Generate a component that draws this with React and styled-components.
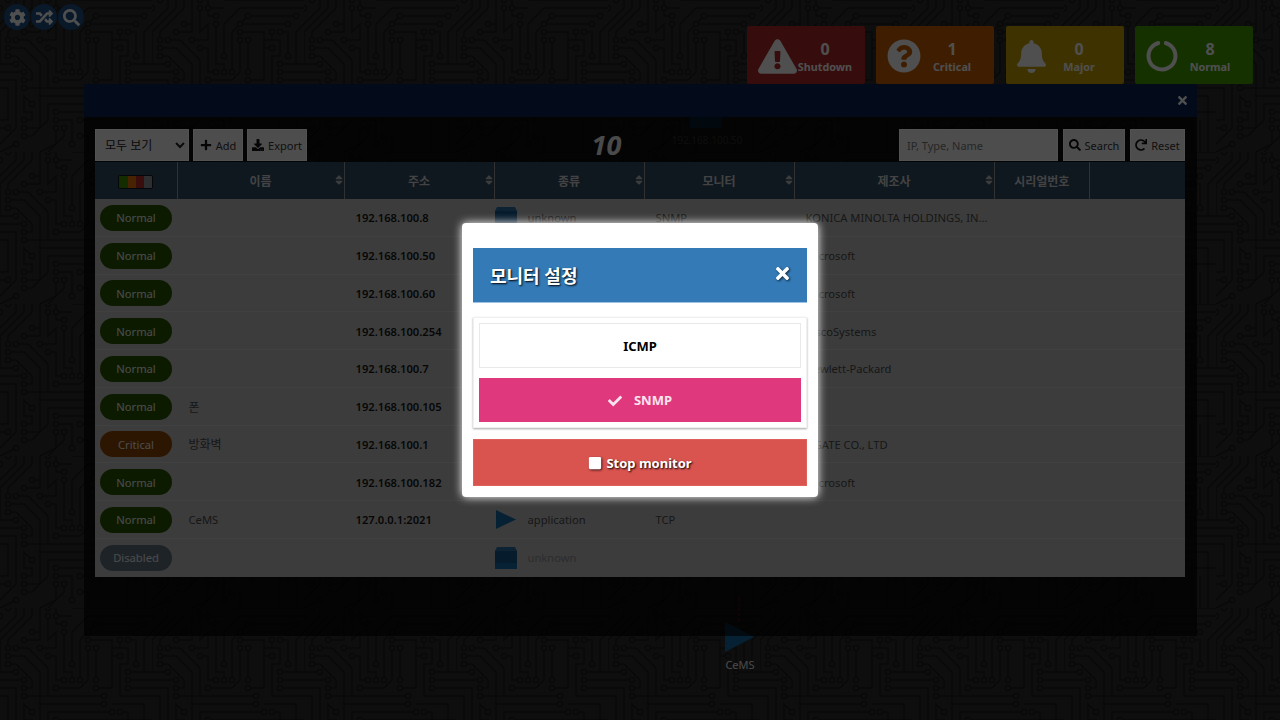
import React from 'react';
import styled, { createGlobalStyle } from 'styled-components';
import {
  FaCog, FaRandom, FaSearch, FaExclamationTriangle, FaQuestionCircle, FaBell, FaCircleNotch,
  FaPlus, FaDownload, FaRedo, FaTimes, FaSort, FaCheck, FaStop,
} from 'react-icons/fa';

const FONT = '"Noto Sans", "Noto Sans CJK KR", sans-serif';

const Global = createGlobalStyle`
  html, body { margin: 0; padding: 0; height: 100%; overflow: hidden; background: #2c2c2c; }
  * { box-sizing: border-box; }
  body { font-family: ${FONT}; }
`;

const Page = styled.div`
  position: relative;
  width: 1280px;
  height: 720px;
  overflow: hidden;
  background: #2c2c2c;
`;

const Backdrop = styled.svg`
  position: absolute;
  inset: 0;
  width: 1280px;
  height: 720px;
`;

const Content = styled.div`
  position: relative;
  display: flex;
  flex-direction: column;
  height: 720px;
`;

const TopBar = styled.header`
  display: flex;
  justify-content: space-between;
  align-items: flex-start;
  height: 84px;
  padding: 4px 27px 0 4px;
`;

const RoundTools = styled.div`
  display: flex;
  gap: 1px;
`;

const RoundTool = styled.button`
  width: 26px;
  height: 26px;
  padding: 0;
  border: 0;
  border-radius: 50%;
  background: #1c4f80;
  color: #f4f4f4;
  display: flex;
  align-items: center;
  justify-content: center;
  font-size: 17px;
`;

const StatusCards = styled.div`
  display: flex;
  gap: 11.5px;
  margin-top: 22px;
`;

const StatusCard = styled.div`
  display: flex;
  align-items: center;
  width: 118px;
  height: 58px;
  padding: 0 11px;
  border-radius: 2px;
  background: ${p => p.$bg};
  color: #f4f4f4;
`;

const CardIcon = styled.div`
  flex: none;
  width: ${p => p.$w}px;
  display: flex;
  justify-content: center;
  font-size: ${p => p.$size}px;
  margin-top: 2px;
`;

const CardText = styled.div`
  flex: 1;
  text-align: center;
  font-weight: 700;
  white-space: nowrap;
  margin-top: 3px;
`;

const CardValue = styled.div`
  font-size: 16px;
  line-height: 20px;
`;

const CardLabel = styled.div`
  font-size: 10.8px;
  line-height: 16px;
`;

const Panel = styled.section`
  margin-left: 84px;
  width: 1113px;
  height: 552px;
  background: rgba(0, 0, 0, 0.66);
  position: relative;
`;

const PanelHead = styled.div`
  height: 33px;
  background: #0b2552;
  display: flex;
  align-items: center;
  justify-content: flex-end;
  padding-right: 8px;
  color: #f4f4f4;
  font-size: 13px;
`;

const PanelBody = styled.div`
  padding: 12px 12px 0 11px;
`;

const Toolbar = styled.div`
  display: flex;
  justify-content: space-between;
  align-items: flex-start;
  height: 33px;
`;

const ToolGroup = styled.div`
  display: flex;
  gap: 4px;
`;

const FilterSelect = styled.select`
  width: 94px;
  height: 32px;
  padding: 0 0 0 5px;
  border: 1px solid #fff;
  border-radius: 0;
  background: #f0f0f0;
  color: #222;
  font: 12px ${FONT};
`;

const ToolButton = styled.button`
  height: 32px;
  padding: 0;
  border: 1px solid #fff;
  background: #f0f0f0;
  color: #333;
  display: flex;
  align-items: center;
  gap: 4px;
  font: 11px ${FONT};
  width: ${p => p.$w}px;
  justify-content: center;
  margin-left: ${p => p.$gap || 0}px;
  svg { flex: none; color: #111; font-size: 12px; }
`;

const CountLabel = styled.div`
  color: #e6e6e6;
  font: italic 700 27px/32px ${FONT};
  margin-left: 7px;
`;

const SearchInput = styled.input`
  width: 159px;
  height: 32px;
  padding: 0 7px;
  border: 1px solid #fff;
  background: #f0f0f0;
  font: 11px ${FONT};
  margin-right: 1px;
  &::placeholder { color: #777; opacity: 1; }
`;

const Table = styled.table`
  width: 1090px;
  table-layout: fixed;
  border-collapse: separate;
  border-spacing: 0;
`;

const Th = styled.th`
  position: relative;
  height: 37px;
  padding: 0;
  background: #2f4a60;
  border-right: 1px solid #9a9a9a;
  color: #d0d0d0;
  font-size: 12px;
  font-weight: 600;
  text-align: center;
  &:last-child { border-right: 0; }
`;

const SortMark = styled.span`
  position: absolute;
  right: -1px;
  top: 12px;
  font-size: 12px;
  line-height: 12px;
  color: #bbb;
`;

const StatusBar = styled.div`
  display: inline-flex;
  vertical-align: middle;
  width: 35px;
  height: 14px;
  border: 1px solid #101820;
  border-radius: 2px;
  overflow: hidden;
`;

const StatusBit = styled.span`
  flex: 1;
  background: ${p => p.$c};
`;

const Td = styled.td`
  height: 37.75px;
  padding: 1px 0 0 ${p => p.$pad ?? 11}px;
  background: rgba(255, 255, 255, 0.72);
  border-bottom: 1px solid rgba(255, 255, 255, 0.2);
  color: ${p => p.$dim ? '#8a8a8a' : '#484848'};
  font-size: ${p => p.$cjk ? 12 : 11.2}px;
  white-space: nowrap;
  overflow: hidden;
  tr:last-child & { border-bottom-color: transparent; }
`;

const AddressCell = styled(Td)`
  color: #141414;
  font-weight: 600;
`;

const Pill = styled.span`
  display: flex;
  align-items: center;
  justify-content: center;
  width: 72px;
  height: 26px;
  border-radius: 13px;
  background: ${p => p.$bg};
  color: #e8e8e8;
  font-size: 11.2px;
`;

const TypeCell = styled.div`
  display: flex;
  align-items: center;
  gap: 11px;
`;

const NodeLayer = styled.svg`
  position: absolute;
  inset: 0;
  width: 1280px;
  height: 720px;
`;

const NodeLabel = styled.div`
  position: absolute;
  left: ${p => p.$x}px;
  top: ${p => p.$y}px;
  transform: translateX(-50%);
  color: ${p => p.$c || '#ccc'};
  font-size: ${p => p.$fs || 11}px;
  white-space: nowrap;
`;

const Overlay = styled.div`
  position: absolute;
  inset: 0;
  background: rgba(0, 0, 0, 0.68);
  display: flex;
  align-items: center;
  justify-content: center;
`;

const Dialog = styled.div`
  width: 356px;
  height: 274px;
  padding: 25px 11px 0;
  background: #fff;
  border-radius: 4px;
  box-shadow: 0 0 10px #fff;
`;

const DialogHead = styled.div`
  display: flex;
  align-items: center;
  justify-content: space-between;
  height: 55px;
  padding: 0 15px 0 17px;
  background: #337ab7;
  border-bottom: 1px solid #9cc3e6;
  color: #fff;
  font-size: 18px;
  font-weight: 700;
  text-shadow: 1px 1px 2px #000;
  svg { font-size: 19px; margin-top: -4px; filter: drop-shadow(1px 1px 1px rgba(0,0,0,.7)); }
`;

const ChoiceBox = styled.div`
  margin-top: 14px;
  height: 111px;
  padding: 5px 5px 0;
  background: #fff;
  border: 1px solid #f0f0f0;
  box-shadow: 0 1px 2px rgba(0, 0, 0, 0.35);
  display: flex;
  flex-direction: column;
  gap: 10px;
`;

const Choice = styled.button`
  height: ${p => p.$on ? 44 : 45}px;
  padding: 0;
  border: 1px solid ${p => p.$on ? '#df387c' : '#e9e9e9'};
  background: ${p => p.$on ? '#df387c' : '#fff'};
  color: ${p => p.$on ? '#fbe3ee' : '#000'};
  font: 700 13px ${FONT};
  display: flex;
  align-items: center;
  justify-content: center;
  gap: 12px;
  svg { font-size: 14px; margin-top: 1px; }
`;

const StopButton = styled.button`
  width: 100%;
  height: 47px;
  margin-top: 11px;
  padding: 0;
  border: 1px solid #e0605c;
  background: #d9534f;
  color: #fff;
  font: 700 13px ${FONT};
  text-shadow: 1px 1px 2px #000;
  display: flex;
  align-items: center;
  justify-content: center;
  gap: 4px;
  svg { font-size: 14px; filter: drop-shadow(1px 1px 1px rgba(0,0,0,.7)); }
`;

const traces = [
  'M152 8H88L72 24V56', 'M144 16H96L80 32V72', 'M88 24H136', 'M88 32H112V80H96', 'M112 48H120',
  'M120 32V40H112M112 40H128V56H120V88H152', 'M128 32H136V56', 'M128 64H152', 'M128 72H152', 'M128 80H152',
  'M144 32V64', 'M144 32L152 24', 'M0 24L16 8V0', 'M0 32L24 8V0', 'M0 32V64', 'M8 40V32L32 8V0', 'M16 40H28L48 60V88',
  'M8 48H24L40 64V96', 'M8 56H16L32 72V80H24', 'M0 64H16', 'M0 72H24', 'M0 80H16V128L0 144', 'M0 88H8V120H0',
  'M24 32H40V0', 'M32 24H40', 'M40 40H56V24L48 32V8', 'M48 48H56V72H64', 'M56 8H72', 'M64 16H56V0', 'M64 24V64H72V72',
  'M88 40V72L80 80H56', 'M96 40V72', 'M112 96H144V152', 'M104 88H24', 'M104 96H40V128H24', 'M112 104H48V120L32 136H24',
  'M32 104L24 96V112H32V120H24', 'M120 104H128V152', 'M56 112H152', 'M56 120H72V144', 'M64 128V136L48 152', 'M56 128V144L40 152',
  'M16 144L0 152', 'M8 128H0', 'M80 120H100V152', 'M80 136H88V152', 'M72 0H152', 'M136 120V152',
];
const pads = [
  [0,8],[144,16],[96,16],[88,24],[136,24],[88,32],[120,32],[128,32],[88,40],[96,40],[120,48],[136,56],[128,64],[8,40],[16,40],[40,40],[8,48],[8,56],
  [16,64],[48,48],[24,72],[128,72],[128,80],[24,80],[8,0],[48,0],[48,8],[56,8],[32,24],[24,32],[64,16],[64,24],[72,56],[64,72],[72,72],[80,72],[96,72],[96,80],
  [56,80],[24,88],[104,88],[104,96],[112,104],[32,104],[120,104],[24,120],[24,128],[24,136],[8,128],[16,144],[56,112],[56,120],[56,128],[64,128],[80,120],[80,136],[72,144],
];

function CircuitBackdrop() {
  return (
    <Backdrop aria-hidden="true">
      <defs>
        <pattern id="circuit" width="152" height="152" patternUnits="userSpaceOnUse">
          {traces.map((d, i) => <path key={i} d={d} fill="none" stroke="#1a1a1a" strokeWidth="1.4" />)}
          {pads.map(([x, y], i) => <circle key={i} cx={x} cy={y} r="2.6" fill="#2c2c2c" stroke="#1a1a1a" strokeWidth="1.2" />)}
        </pattern>
      </defs>
      <rect width="1280" height="720" fill="url(#circuit)" />
    </Backdrop>
  );
}

const UnknownIcon = () => (
  <svg width="22" height="22" viewBox="0 0 22 22" style={{ flex: 'none' }}>
    <path d="M2 0H20L22 4V22H0V4Z" fill="#2a6a9c" />
    <path d="M0 4H22V22H0Z" fill="#14568a" />
    <path d="M0 16H22V22H0Z" fill="#1a6aa6" />
  </svg>
);

const AppIcon = () => (
  <svg width="22" height="19" viewBox="0 0 22 19" style={{ flex: 'none' }}>
    <path d="M1 0L21 9.5L1 19Z" fill="#14689f" />
  </svg>
);

const rows = [
  { st: 'Normal', addr: '192.168.100.8', kind: 'unknown', mon: 'SNMP', vendor: 'KONICA MINOLTA HOLDINGS, IN...' },
  { st: 'Normal', addr: '192.168.100.50', kind: 'unknown', mon: 'SNMP', vendor: 'Microsoft' },
  { st: 'Normal', addr: '192.168.100.60', kind: 'unknown', mon: 'SNMP', vendor: 'Microsoft' },
  { st: 'Normal', addr: '192.168.100.254', kind: 'unknown', mon: 'SNMP', vendor: 'CiscoSystems' },
  { st: 'Normal', addr: '192.168.100.7', kind: 'unknown', mon: 'SNMP', vendor: 'Hewlett-Packard' },
  { st: 'Normal', name: '폰', cjk: true, addr: '192.168.100.105', kind: 'unknown', mon: 'SNMP', vendor: '' },
  { st: 'Critical', name: '방화벽', cjk: true, addr: '192.168.100.1', kind: 'unknown', mon: 'SNMP', vendor: 'UGATE CO., LTD' },
  { st: 'Normal', addr: '192.168.100.182', kind: 'unknown', mon: 'SNMP', vendor: 'Microsoft' },
  { st: 'Normal', name: 'CeMS', addr: '127.0.0.1:2021', kind: 'application', mon: 'TCP', vendor: '' },
  { st: 'Disabled', addr: '', kind: 'unknown', mon: '', vendor: '', dim: true },
];

const pillColors = { Normal: '#265400', Critical: '#8a4406', Disabled: '#5f6e7d' };
const columns = [
  { w: 82.5 }, { w: 167, t: '이름', s: 1 }, { w: 150, t: '주소', s: 1 }, { w: 150, t: '종류', s: 1 },
  { w: 150, t: '모니터', s: 1 }, { w: 200, t: '제조사', s: 1 }, { w: 95.5, t: '시리얼번호' }, { w: 95 },
];

const cards = [
  { bg: '#a82828', w: 39, size: 39, Icon: FaExclamationTriangle, v: 0, l: 'Shutdown' },
  { bg: '#c25c00', w: 34, size: 34, Icon: FaQuestionCircle, v: 1, l: 'Critical' },
  { bg: '#c29c00', w: 29, size: 35, Icon: FaBell, v: 0, l: 'Major' },
  { bg: '#449800', w: 32, size: 34, Icon: FaCircleNotch, v: 8, l: 'Normal' },
];

export default function App() {
  return (
    <Page>
      <Global />
      <CircuitBackdrop />
      <NodeLayer aria-hidden="true">
        <rect x="690" y="112" width="32" height="16" fill="#14568a" />
        <path d="M739 598V622" stroke="#a02020" strokeWidth="2" strokeDasharray="3 2" />
        <path d="M725 622L754 637L725 652Z" fill="#14689f" />
      </NodeLayer>
      <NodeLabel $x={707} $y={133} $c="#777" $fs={10}>192.168.100.50</NodeLabel>
      <NodeLabel $x={740} $y={657} $c="#e4e4e4" $fs={11}>CeMS</NodeLabel>
      <Content>
        <TopBar>
          <RoundTools>
            <RoundTool><FaCog /></RoundTool>
            <RoundTool><FaRandom /></RoundTool>
            <RoundTool><FaSearch /></RoundTool>
          </RoundTools>
          <StatusCards>
            {cards.map(({ bg, w, size, Icon, v, l }) => (
              <StatusCard key={l} $bg={bg}>
                <CardIcon $w={w} $size={size}><Icon /></CardIcon>
                <CardText>
                  <CardValue>{v}</CardValue>
                  <CardLabel>{l}</CardLabel>
                </CardText>
              </StatusCard>
            ))}
          </StatusCards>
        </TopBar>
        <Panel>
          <PanelHead><FaTimes /></PanelHead>
          <PanelBody>
            <Toolbar>
              <ToolGroup>
                <FilterSelect defaultValue="all"><option value="all">모두 보기</option></FilterSelect>
                <ToolButton $w={50}><FaPlus />Add</ToolButton>
                <ToolButton $w={60}><FaDownload />Export</ToolButton>
              </ToolGroup>
              <CountLabel>10</CountLabel>
              <ToolGroup>
                <SearchInput placeholder="IP, Type, Name" />
                <ToolButton $w={62}><FaSearch />Search</ToolButton>
                <ToolButton $w={55} $gap={1}><FaRedo />Reset</ToolButton>
              </ToolGroup>
            </Toolbar>
            <Table>
              <colgroup>{columns.map((c, i) => <col key={i} style={{ width: c.w }} />)}</colgroup>
              <thead>
                <tr>
                  {columns.map((c, i) => (
                    <Th key={i}>
                      {i === 0 ? (
                        <StatusBar>
                          <StatusBit $c="#3c8a00" /><StatusBit $c="#dc6d0a" /><StatusBit $c="#b52a2a" /><StatusBit $c="#8a8f95" />
                        </StatusBar>
                      ) : c.t}
                      {c.s ? <SortMark><FaSort /></SortMark> : null}
                    </Th>
                  ))}
                </tr>
              </thead>
              <tbody>
                {rows.map((r, i) => (
                  <tr key={i}>
                    <Td $pad={5}><Pill $bg={pillColors[r.st]}>{r.st}</Pill></Td>
                    <Td $cjk={r.cjk}>{r.name}</Td>
                    <AddressCell>{r.addr}</AddressCell>
                    <Td $pad={0} $dim={r.dim}>
                      <TypeCell>{r.kind === 'application' ? <AppIcon /> : <UnknownIcon />}{r.kind}</TypeCell>
                    </Td>
                    <Td>{r.mon}</Td>
                    <Td>{r.vendor}</Td>
                    <Td />
                    <Td />
                  </tr>
                ))}
              </tbody>
            </Table>
          </PanelBody>
        </Panel>
      </Content>
      <Overlay>
        <Dialog>
          <DialogHead>모니터 설정<FaTimes /></DialogHead>
          <ChoiceBox>
            <Choice>ICMP</Choice>
            <Choice $on><FaCheck />SNMP</Choice>
          </ChoiceBox>
          <StopButton><FaStop />Stop monitor</StopButton>
        </Dialog>
      </Overlay>
    </Page>
  );
}
